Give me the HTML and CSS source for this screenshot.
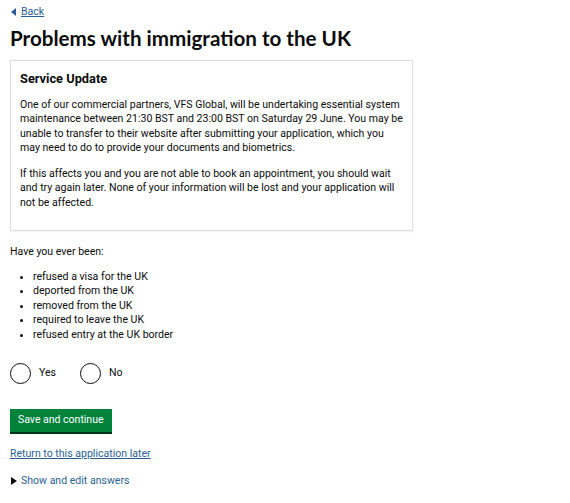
FILE: index.html
```html
<!DOCTYPE html>
<html lang="en">
<head>
  <meta charset="UTF-8">
  <meta name="viewport" content="width=device-width, initial-scale=1.0">
  <title>Problems with immigration to the UK</title>
  <link rel="stylesheet" href="styles.css">
</head>
<body>
  <main class="page">
    <a class="back-link" href="#">Back</a>
    <h1 class="page-title">Problems with immigration to the UK</h1>

    <section class="notice">
      <h2 class="notice-title">Service Update</h2>
      <p>One of our commercial partners, VFS Global, will be undertaking essential system maintenance between 21:30 BST and 23:00 BST on Saturday 29 June. You may be unable to transfer to their website after submitting your application, which you may need to do to provide your documents and biometrics.</p>
      <p>If this affects you and you are not able to book an appointment, you should wait and try again later. None of your information will be lost and your application will not be affected.</p>
    </section>

    <form class="question">
      <p class="question-lead">Have you ever been:</p>
      <ul class="bullets">
        <li>refused a visa for the UK</li>
        <li>deported from the UK</li>
        <li>removed from the UK</li>
        <li>required to leave the UK</li>
        <li>refused entry at the UK border</li>
      </ul>

      <div class="radios">
        <label class="radio"><input type="radio" name="problems" value="yes"><span class="radio-mark"></span>Yes</label>
        <label class="radio"><input type="radio" name="problems" value="no"><span class="radio-mark"></span>No</label>
      </div>

      <button class="btn" type="button">Save and continue</button>
    </form>

    <a class="later-link" href="#">Return to this application later</a>

    <details class="answers">
      <summary>Show and edit answers</summary>
    </details>
  </main>
</body>
</html>
```

FILE: styles.css
```css
body {
  margin: 0;
  font-family: Roboto, "Liberation Sans", sans-serif;
  color: #0b0c0c;
  background: #fff;
}
.page {
  padding: 0 10px;
  font-size: 10.55px;
  line-height: 14.5px;
}
a {
  color: #2b5f94;
}

.back-link {
  display: inline-block;
  margin-top: 5px;
  padding-left: 11px;
  position: relative;
}
.back-link::before {
  content: "";
  position: absolute;
  left: 1px;
  top: 3px;
  border-style: solid;
  border-width: 4px 5px 4px 0;
  border-color: transparent #2b5f94 transparent transparent;
}

.page-title {
  margin: 5px 0 0;
  font-family: Lato, "Liberation Sans", sans-serif;
  font-size: 20.6px;
  line-height: 26px;
  font-weight: 700;
}

.notice {
  margin-top: 9px;
  width: 403px;
  box-sizing: border-box;
  border: 1px solid #dedede;
  box-shadow: 0 1px 2px rgba(0, 0, 0, 0.06);
  padding: 9px 9px 20px;
}
.notice-title {
  margin: 0;
  font-size: 12.8px;
  line-height: 18px;
  font-weight: 700;
}
.notice p {
  margin: 10px 0 0;
}
.notice p + p {
  margin-top: 11px;
}

.question-lead {
  margin: 14px 0 0;
}
.bullets {
  margin: 10px 0 0;
  padding-left: 23px;
}

.radios {
  display: flex;
  gap: 24px;
  margin-top: 21px;
}
.radio {
  display: flex;
  align-items: center;
  gap: 8px;
}
.radio input {
  display: none;
}
.radio-mark {
  width: 19px;
  height: 19px;
  border: 1.5px solid #0b0c0c;
  border-radius: 50%;
}

.btn {
  display: block;
  margin-top: 25px;
  padding: 0 8px;
  height: 23px;
  border: 0;
  background: #00823b;
  box-shadow: 0 2px 0 #003618;
  color: #fff;
  font: inherit;
  font-size: 10.5px;
}

.later-link {
  display: inline-block;
  margin-top: 15px;
}

.answers {
  margin-top: 12px;
  color: #2b5f94;
}
.answers summary {
  list-style: none;
  position: relative;
  padding-left: 11px;
}
.answers summary::before {
  content: "";
  position: absolute;
  left: 1px;
  top: 3px;
  border-style: solid;
  border-width: 4px 0 4px 6px;
  border-color: transparent transparent transparent #0b0c0c;
}
```
